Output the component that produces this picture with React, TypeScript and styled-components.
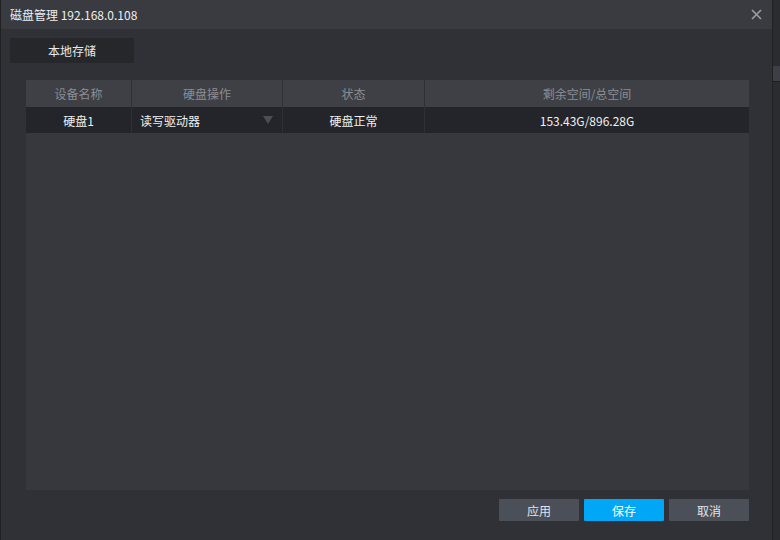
import styled, { createGlobalStyle } from 'styled-components';

const GlobalStyle = createGlobalStyle`
  html, body {
    margin: 0;
    padding: 0;
    background: #26282c;
  }
  body {
    font-family: 'Noto Sans CJK SC', 'Noto Sans', sans-serif;
    font-size: 12px;
  }
`;

const Page = styled.div`
  display: flex;
  width: 780px;
  height: 540px;
  overflow: hidden;
`;

const Dialog = styled.div`
  width: 773px;
  height: 540px;
  flex-shrink: 0;
  display: flex;
  flex-direction: column;
  background: #2f3136;
  border-left: 1px solid #1f2124;
  border-right: 1px solid #1f2124;
  box-sizing: border-box;
`;

const Backdrop = styled.div`
  flex: 1;
  background: #2a2c30;
  padding-top: 66px;
`;

const BackdropStrip = styled.div`
  height: 15px;
  background: #3c3f45;
  border-bottom: 1px solid #1d1f22;
`;

const TitleBar = styled.div`
  height: 29px;
  flex-shrink: 0;
  display: flex;
  align-items: center;
  justify-content: space-between;
  padding: 0 10px 0 9px;
  background: #393b40;
  color: #eceef0;
`;

const CloseButton = styled.span`
  display: flex;
  color: #9a9da3;
  cursor: pointer;
`;

const TabStrip = styled.div`
  display: flex;
  padding: 9px 0 0 9px;
`;

const Tab = styled.div`
  width: 124px;
  height: 25px;
  display: flex;
  align-items: center;
  justify-content: center;
  background: #25272b;
  color: #e8e9eb;
`;

const Content = styled.div`
  flex: 1;
  display: flex;
  flex-direction: column;
  padding: 17px 23px 19px 25px;
`;

const TableBox = styled.div`
  flex: 1;
  background: #36383d;
`;

const Table = styled.table`
  width: 100%;
  border-collapse: collapse;
  table-layout: fixed;
`;

const Th = styled.th<{ $w?: number }>`
  width: ${p => (p.$w ? `${p.$w}px` : 'auto')};
  height: 27px;
  padding: 0;
  background: #3e4045;
  color: #8b8e94;
  font-weight: normal;
  text-align: center;
  border-left: 1px solid #2e3034;
  &:first-child {
    border-left: none;
  }
`;

const Td = styled.td<{ $left?: boolean }>`
  height: 26px;
  padding: 0 ${p => (p.$left ? '8px' : '0')};
  background: #23252a;
  color: #f0f1f2;
  text-align: ${p => (p.$left ? 'left' : 'center')};
  border-left: 1px solid #2e3034;
  &:first-child {
    border-left: none;
  }
`;

const SelectCell = styled.div`
  display: flex;
  align-items: center;
  justify-content: space-between;
`;

const Caret = styled.span`
  width: 0;
  height: 0;
  margin-right: 1px;
  border-left: 5px solid transparent;
  border-right: 5px solid transparent;
  border-top: 8px solid #4a4d53;
`;

const Footer = styled.div`
  display: flex;
  justify-content: flex-end;
  gap: 5px;
  padding-top: 9px;
`;

const Button = styled.button<{ $primary?: boolean }>`
  width: 80px;
  height: 22px;
  border: none;
  border-radius: 1px;
  padding: 0;
  font-family: inherit;
  font-size: 12px;
  background: ${p => (p.$primary ? '#00a7f7' : '#4b4f57')};
  color: ${p => (p.$primary ? '#ffffff' : '#e4e5e7')};
  cursor: pointer;
`;

export default function App() {
  return (
    <Page>
      <GlobalStyle />
      <Dialog>
        <TitleBar>
          <span>磁盘管理 192.168.0.108</span>
          <CloseButton>
            <svg width='11' height='11' viewBox='0 0 11 11'>
              <path d='M1 1L10 10M10 1L1 10' stroke='currentColor' strokeWidth='1.6' />
            </svg>
          </CloseButton>
        </TitleBar>
        <TabStrip>
          <Tab>本地存储</Tab>
        </TabStrip>
        <Content>
          <TableBox>
            <Table>
              <thead>
                <tr>
                  <Th $w={105}>设备名称</Th>
                  <Th $w={150}>硬盘操作</Th>
                  <Th $w={141}>状态</Th>
                  <Th>剩余空间/总空间</Th>
                </tr>
              </thead>
              <tbody>
                <tr>
                  <Td>硬盘1</Td>
                  <Td $left>
                    <SelectCell>
                      <span>读写驱动器</span>
                      <Caret />
                    </SelectCell>
                  </Td>
                  <Td>硬盘正常</Td>
                  <Td>153.43G/896.28G</Td>
                </tr>
              </tbody>
            </Table>
          </TableBox>
          <Footer>
            <Button>应用</Button>
            <Button $primary>保存</Button>
            <Button>取消</Button>
          </Footer>
        </Content>
      </Dialog>
      <Backdrop>
        <BackdropStrip />
      </Backdrop>
    </Page>
  );
}
